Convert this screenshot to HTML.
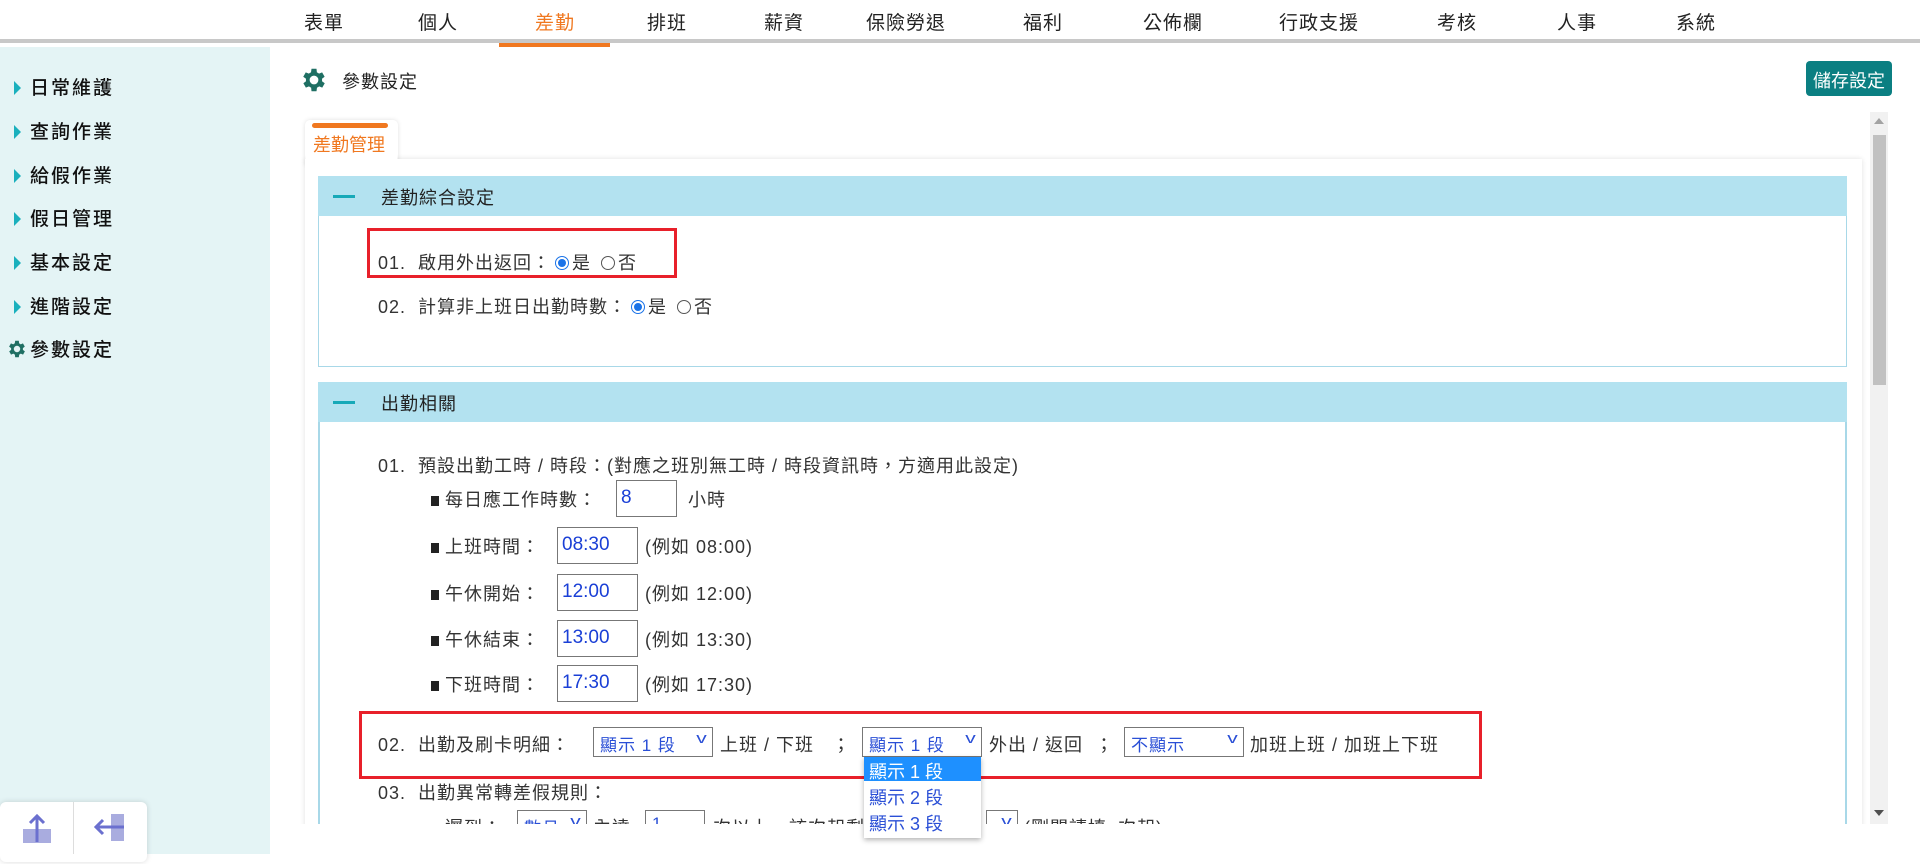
<!DOCTYPE html>
<html><head><meta charset="utf-8"><style>
*{box-sizing:border-box;margin:0;padding:0}
body{width:1920px;height:854px;overflow:hidden;background:#fff;font-family:"Liberation Sans","Noto Sans CJK TC",sans-serif;color:#333;position:relative}
.a{position:absolute;white-space:nowrap}
.nav{position:absolute;left:0;top:0;width:1920px;height:43px;background:#fff;border-bottom:4px solid #c8c8c8}
.nav span{position:absolute;top:8px;font-size:19px;color:#222;transform:translateX(-50%);letter-spacing:1px}
.side{position:absolute;left:0;top:47px;width:270px;height:807px;background:#e4f4f5}
.side div{position:absolute;left:14px;font-size:19px;color:#111;letter-spacing:2px;font-weight:500}
.side i{display:inline-block;width:0;height:0;border-left:7px solid #1ab0bd;border-top:7px solid transparent;border-bottom:7px solid transparent;margin-right:9px;vertical-align:-1px}
.t{font-size:18px;color:#333;letter-spacing:1px}
.inp{position:absolute;height:37px;border:1px solid #777;background:#fff;color:#1a3fd6;font-size:19px;padding:6px 0 0 4px}
.sel{position:absolute;height:30px;border:1px solid #777;background:#fff;color:#2a4fd6;font-size:17px;padding:3px 0 0 6px;letter-spacing:1px}
.sel b{position:absolute;right:6px;top:2px;font-weight:normal;color:#2a4fd6;font-size:15px;transform:scaleX(1.4)}
.bul{display:inline-block;width:8px;height:10px;background:#222;margin-right:6px}
.hd{position:absolute;left:318px;width:1529px;height:40px;background:#b3e2f0}
.hd i{position:absolute;left:15px;top:19px;width:22px;height:3px;background:#17a9b8}
.hd span{position:absolute;left:63px;top:8px;font-size:18px;color:#222;letter-spacing:1px}
.radio{display:inline-block;width:14px;height:14px;border-radius:50%;border:1px solid #555;vertical-align:-1px;margin:0 3px 0 4px;position:relative}
.radio.on{border:1px solid #1a73e8}
.radio.on::after{content:"";position:absolute;left:2px;top:2px;width:8px;height:8px;border-radius:50%;background:#1a73e8}
.red{position:absolute;border:3px solid #e8202a}
</style></head><body>
<div class="nav">
<span style="left:324px">表單</span><span style="left:438px">個人</span><span style="left:555px;color:#f07820">差勤</span><span style="left:667px">排班</span><span style="left:784px">薪資</span><span style="left:906px">保險勞退</span><span style="left:1043px">福利</span><span style="left:1173px">公佈欄</span><span style="left:1319px">行政支援</span><span style="left:1457px">考核</span><span style="left:1577px">人事</span><span style="left:1696px">系統</span>
</div>
<div class="a" style="left:499px;top:43px;width:111px;height:4px;background:#f07820"></div>
<div class="side">
<div style="top:26px"><i></i>日常維護</div>
<div style="top:70px"><i></i>查詢作業</div>
<div style="top:114px"><i></i>給假作業</div>
<div style="top:157px"><i></i>假日管理</div>
<div style="top:201px"><i></i>基本設定</div>
<div style="top:245px"><i></i>進階設定</div>
<div style="top:288px;left:6px"><svg width="22" height="22" viewBox="0 0 24 24" style="vertical-align:-4px;margin-right:2px"><path fill="#1f6f63" d="M19.4 13a7.5 7.5 0 0 0 0-2l2.1-1.6-2-3.5-2.5 1a7 7 0 0 0-1.7-1L15 3h-4l-.4 2.9a7 7 0 0 0-1.7 1l-2.5-1-2 3.5L6.6 11a7.5 7.5 0 0 0 0 2l-2.1 1.6 2 3.5 2.5-1a7 7 0 0 0 1.7 1L11 21h4l.4-2.9a7 7 0 0 0 1.7-1l2.5 1 2-3.5zM13 15.5a3.5 3.5 0 1 1 0-7 3.5 3.5 0 0 1 0 7z" transform="translate(-1 0)"/></svg>參數設定</div>
</div>

<svg class="a" style="left:299px;top:65px" width="30" height="30" viewBox="0 0 24 24"><path fill="#1f6f63" d="M19.4 13a7.5 7.5 0 0 0 0-2l2.1-1.6-2-3.5-2.5 1a7 7 0 0 0-1.7-1L15 3h-4l-.4 2.9a7 7 0 0 0-1.7 1l-2.5-1-2 3.5L6.6 11a7.5 7.5 0 0 0 0 2l-2.1 1.6 2 3.5 2.5-1a7 7 0 0 0 1.7 1L11 21h4l.4-2.9a7 7 0 0 0 1.7-1l2.5 1 2-3.5zM13 15.5a3.5 3.5 0 1 1 0-7 3.5 3.5 0 0 1 0 7z" transform="translate(-1 0)"/></svg>
<div class="a t" style="left:342px;top:68px;color:#222">參數設定</div>
<div class="a" style="left:1806px;top:61px;width:86px;height:35px;background:#0b7f82;border-radius:4px;color:#fff;font-size:18px;text-align:center;padding-top:6px">儲存設定</div>

<div class="a" style="left:1870px;top:112px;width:18px;height:712px;background:#f1f1f1"></div>
<div class="a" style="left:1873px;top:135px;width:13px;height:250px;background:#c1c1c1"></div>
<div class="a" style="left:1874px;top:118px;width:0;height:0;border-left:5px solid transparent;border-right:5px solid transparent;border-bottom:6px solid #a3a3a3"></div>
<div class="a" style="left:1874px;top:810px;width:0;height:0;border-left:5px solid transparent;border-right:5px solid transparent;border-top:6px solid #505050"></div>

<div class="a" style="left:305px;top:120px;width:93px;height:45px;background:#fff;border-radius:5px 5px 0 0;box-shadow:0 0 5px rgba(0,0,0,.12)"></div>
<div class="a" style="left:305px;top:159px;width:1557px;height:700px;background:#fff;box-shadow:0 0 5px rgba(0,0,0,.12)"></div>
<div class="a" style="left:306px;top:150px;width:91px;height:20px;background:#fff"></div>
<div class="a" style="left:312px;top:123px;width:76px;height:5px;background:#f07820;border-radius:3px"></div>
<div class="a" style="left:313px;top:131px;font-size:18px;color:#f07820">差勤管理</div>

<div class="hd" style="top:176px"><i></i><span>差勤綜合設定</span></div>
<div class="a" style="left:318px;top:216px;width:1529px;height:151px;border:1px solid #a8d8e8;border-top:none"></div>
<div class="a t" style="left:378px;top:249px">01.&nbsp;&nbsp;啟用外出返回：<span class="radio on"></span>是 <span class="radio"></span>否</div>
<div class="a t" style="left:378px;top:293px">02.&nbsp;&nbsp;計算非上班日出勤時數：<span class="radio on"></span>是 <span class="radio"></span>否</div>
<div class="red" style="left:367px;top:228px;width:310px;height:50px"></div>

<div class="hd" style="top:382px"><i></i><span>出勤相關</span></div>
<div class="a" style="left:318px;top:422px;width:1529px;height:402px;border-left:2px solid #a8d8e8;border-right:2px solid #a8d8e8"></div>
<div class="a t" style="left:378px;top:452px">01.&nbsp;&nbsp;預設出勤工時 / 時段：(對應之班別無工時 / 時段資訊時，方適用此設定)</div>
<div class="a t" style="left:431px;top:486px"><span class="bul"></span>每日應工作時數：</div><div class="inp" style="left:616px;top:480px;width:61px">8</div><div class="a t" style="left:688px;top:486px">小時</div>
<div class="a t" style="left:431px;top:533px"><span class="bul"></span>上班時間：</div><div class="inp" style="left:557px;top:527px;width:81px">08:30</div><div class="a t" style="left:645px;top:533px">(例如 08:00)</div>
<div class="a t" style="left:431px;top:580px"><span class="bul"></span>午休開始：</div><div class="inp" style="left:557px;top:574px;width:81px">12:00</div><div class="a t" style="left:645px;top:580px">(例如 12:00)</div>
<div class="a t" style="left:431px;top:626px"><span class="bul"></span>午休結束：</div><div class="inp" style="left:557px;top:620px;width:81px">13:00</div><div class="a t" style="left:645px;top:626px">(例如 13:30)</div>
<div class="a t" style="left:431px;top:671px"><span class="bul"></span>下班時間：</div><div class="inp" style="left:557px;top:665px;width:81px">17:30</div><div class="a t" style="left:645px;top:671px">(例如 17:30)</div>

<div class="a t" style="left:378px;top:731px">02.&nbsp;&nbsp;出勤及刷卡明細：</div>
<div class="sel" style="left:593px;top:727px;width:120px">顯示 1 段<b>v</b></div>
<div class="a t" style="left:720px;top:731px">上班 / 下班&nbsp;&nbsp;&nbsp;；</div>
<div class="sel" style="left:862px;top:727px;width:120px">顯示 1 段<b>v</b></div>
<div class="a t" style="left:989px;top:731px">外出 / 返回&nbsp;&nbsp;；</div>
<div class="sel" style="left:1124px;top:727px;width:120px">不顯示<b>v</b></div>
<div class="a t" style="left:1250px;top:731px">加班上班 / 加班上下班</div>
<div class="red" style="left:359px;top:711px;width:1123px;height:68px"></div>

<div class="a t" style="left:378px;top:779px">03.&nbsp;&nbsp;出勤異常轉差假規則：</div>
<div class="a" style="left:305px;top:810px;width:1557px;height:14px;overflow:hidden">
<div class="a t" style="left:126px;top:4px"><span class="bul"></span>遲到：</div>
<div class="sel" style="left:212px;top:0px;width:70px">數月<b>v</b></div>
<div class="a t" style="left:288px;top:4px">內達</div>
<div class="sel" style="left:340px;top:0px;width:60px">1</div>
<div class="a t" style="left:408px;top:4px">次以上，該次起剩</div>
<div class="sel" style="left:681px;top:0px;width:32px">&nbsp;<b>v</b></div>
<div class="a t" style="left:719px;top:4px">(剛開請填n次起)</div>
</div>
<div class="a" style="left:270px;top:824px;width:1650px;height:40px;background:#fff"></div>
<div class="a" style="left:0;top:802px;width:147px;height:60px;background:#fff;border-radius:6px;box-shadow:0 0 6px rgba(0,0,0,.15)"></div>
<div class="a" style="left:73px;top:802px;width:1px;height:52px;background:#ddd"></div>
<svg class="a" style="left:22px;top:812px" width="30" height="40" viewBox="0 0 30 40"><rect x="1" y="17" width="28" height="14" fill="#a9acdf"/><path d="M15 30V4M8 11l7-7 7 7" stroke="#6b70cf" stroke-width="3" fill="none"/></svg>
<svg class="a" style="left:92px;top:812px" width="36" height="40" viewBox="0 0 36 40"><rect x="19" y="2" width="13" height="27" fill="#a9acdf"/><path d="M32 15H4M11 8l-7 7 7 7" stroke="#6b70cf" stroke-width="3" fill="none"/></svg>

<div class="a" style="left:864px;top:757px;width:117px;height:81px;background:#fff;box-shadow:0 2px 5px rgba(0,0,0,.3);font-size:18px;color:#2a4fd6">
<div style="height:24px;background:#1e90ff;color:#fff;padding:1px 0 0 5px">顯示 1 段</div>
<div style="height:28px;padding:3px 0 0 5px">顯示 2 段</div>
<div style="height:28px;padding:1px 0 0 5px">顯示 3 段</div>
</div>
</body></html>
